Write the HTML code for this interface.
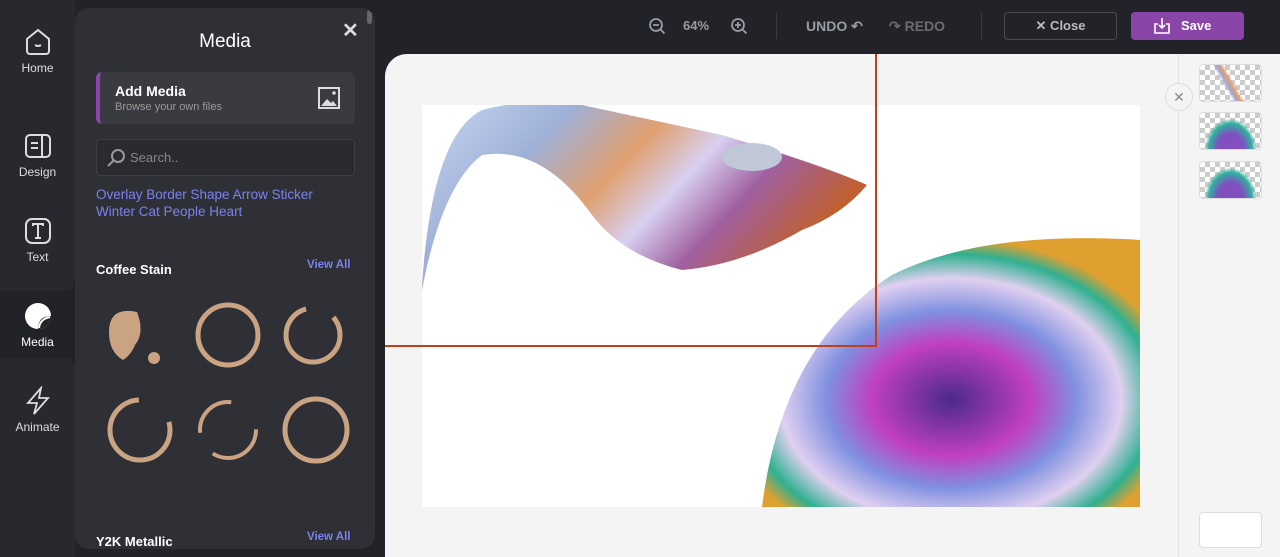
<!DOCTYPE html>
<html><head><meta charset="utf-8"><style>
*{box-sizing:border-box;margin:0;padding:0}
body{width:1280px;height:557px;overflow:hidden;background:#212328;font-family:"Liberation Sans",sans-serif;position:relative}
.abs{position:absolute}
.blk{background:#27292e}
.item{position:absolute;left:0;width:75px;text-align:center;font-size:12px;color:#ddd}
.item svg{display:block;margin:0 auto 4px}
.panel{left:75px;top:8px;width:300px;height:541px;background:#2f3035;border-radius:14px;overflow:hidden}
.tb{color:#9a9ca3;font-weight:bold;font-size:14px}
</style></head><body>
<div class="abs blk" style="left:0;top:0;width:75px;height:291px;border-radius:0 0 10px 0"></div>
<div class="abs blk" style="left:0;top:358px;width:75px;height:199px;border-radius:0 10px 0 0"></div>
<div class="item" style="top:27px"><svg width="30" height="30" viewBox="0 0 30 30" fill="none" stroke="#ddd" stroke-width="2"><path d="M4 12L15 3l11 9v12a3 3 0 0 1-3 3H7a3 3 0 0 1-3-3z"/><path d="M12 18q3 2 6 0"/></svg>Home</div>
<div class="item" style="top:131px"><svg width="30" height="30" viewBox="0 0 30 30" fill="none" stroke="#ddd" stroke-width="2"><rect x="3" y="4" width="24" height="22" rx="4"/><path d="M19 4v22M8 12h7M8 17h7"/></svg>Design</div>
<div class="item" style="top:216px"><svg width="30" height="30" viewBox="0 0 30 30" fill="none" stroke="#ddd" stroke-width="2"><rect x="3" y="3" width="24" height="24" rx="6"/><path d="M10 10V8h10v2M15 8v14M12 22h6"/></svg>Text</div>
<div class="item" style="top:301px;color:#fff"><svg width="30" height="30" viewBox="0 0 30 30"><circle cx="15" cy="15" r="13" fill="#fff"/><path d="M28 15a13 13 0 0 1-13 13q0-13 13-13z" fill="#212328"/><path d="M16 27q1-9 11-11" stroke="#fff" stroke-width="2" fill="none"/></svg>Media</div>
<div class="item" style="top:386px"><svg width="30" height="30" viewBox="0 0 30 30" fill="none" stroke="#ddd" stroke-width="1.8"><path d="M18 2L5 17h9l-3 11 14-16h-9z"/></svg>Animate</div>
<div class="abs panel">
<div class="abs" style="right:3px;top:2px;width:5px;height:14px;background:#666;border-radius:3px"></div>
<div class="abs" style="left:0;width:300px;top:23px;text-align:center;color:#fff;font-size:19px">Media</div>
<div class="abs" style="left:267px;top:10px;color:#ddd;font-size:20px;font-weight:bold">✕</div>
<div class="abs" style="left:21px;top:64px;width:259px;height:52px;background:#3a3b40;border-radius:6px;border-left:4px solid #8e44ad">
 <div class="abs" style="left:15px;top:11px;color:#fff;font-size:14px;font-weight:bold">Add Media</div>
 <div class="abs" style="left:15px;top:29px;color:#999;font-size:11px">Browse your own files</div>
 <svg class="abs" style="left:218px;top:15px" width="22" height="22" viewBox="0 0 22 22"><rect x="1" y="1" width="20" height="20" fill="none" stroke="#ddd" stroke-width="2"/><path d="M3 19l6-7 4 4 2-2 4 5z" fill="#ddd"/><circle cx="16" cy="6" r="1.8" fill="#ddd"/></svg>
</div>
<div class="abs" style="left:21px;top:131px;width:259px;height:37px;background:#2a2b2f;border:1px solid #3d3e43;border-radius:4px">
 <svg class="abs" style="left:9px;top:8px" width="20" height="20" viewBox="0 0 20 20" fill="none" stroke="#999" stroke-width="2"><circle cx="12" cy="8" r="6"/><path d="M8 12l-6 6"/></svg>
 <div class="abs" style="left:33px;top:10px;color:#888;font-size:13px">Search..</div>
</div>
<div class="abs" style="left:21px;top:178px;color:#7b82f0;font-size:13.5px;line-height:17px">Overlay Border Shape Arrow Sticker<br>Winter Cat People Heart</div>
<div class="abs" style="left:21px;top:254px;color:#fff;font-size:13px;font-weight:bold">Coffee Stain</div>
<div class="abs" style="left:232px;top:251px;color:#7b82f0;font-size:11.5px;font-weight:bold">View All</div>
<svg class="abs" style="left:0;top:290px" width="300" height="180" viewBox="0 0 300 180" fill="none" stroke="#c9a382">
<path d="M62 14q-28-6-28 20q0 20 14 28q8-5 12-15q10-12 2-33z" fill="#c9a382" stroke="none"/><circle cx="79" cy="60" r="6" fill="#c9a382" stroke="none"/>
<circle cx="153" cy="37" r="30" stroke-width="5"/>
<circle cx="238" cy="37" r="27" stroke-width="5" stroke-dasharray="120 30"/>
<circle cx="65" cy="132" r="30" stroke-width="5" stroke-dasharray="140 40"/>
<circle cx="153" cy="132" r="28" stroke-width="4" stroke-dasharray="60 25 50 40"/>
<circle cx="241" cy="132" r="31" stroke-width="5"/>
</svg>
<div class="abs" style="left:21px;top:526px;color:#fff;font-size:13px;font-weight:bold">Y2K Metallic</div>
<div class="abs" style="left:232px;top:523px;color:#7b82f0;font-size:11.5px;font-weight:bold">View All</div>
</div>
<svg class="abs" style="left:648px;top:17px" width="18" height="18" viewBox="0 0 18 18" fill="none" stroke="#9a9ca3" stroke-width="1.8"><circle cx="8" cy="8" r="6"/><path d="M5 8h6M12.5 12.5l4 4"/></svg>
<div class="abs tb" style="left:683px;top:18px;font-size:13px">64%</div>
<svg class="abs" style="left:730px;top:17px" width="18" height="18" viewBox="0 0 18 18" fill="none" stroke="#9a9ca3" stroke-width="1.8"><circle cx="8" cy="8" r="6"/><path d="M5 8h6M8 5v6M12.5 12.5l4 4"/></svg>
<div class="abs" style="left:776px;top:13px;width:1px;height:26px;background:#3a3c42"></div>
<div class="abs tb" style="left:806px;top:18px">UNDO ↶</div>
<div class="abs tb" style="left:889px;top:18px;color:#6a6c72">↷ REDO</div>
<div class="abs" style="left:981px;top:13px;width:1px;height:26px;background:#3a3c42"></div>
<div class="abs" style="left:1004px;top:12px;width:113px;height:28px;border:1px solid #4a4c52;border-radius:4px;color:#bbb;font-size:13px;font-weight:bold;text-align:center;line-height:26px">✕ Close</div>
<div class="abs" style="left:1131px;top:12px;width:113px;height:28px;background:#8a45a8;border-radius:4px;color:#fff;font-size:13px;font-weight:bold;line-height:28px">
<svg class="abs" style="left:22px;top:5px" width="18" height="18" viewBox="0 0 18 18" fill="none" stroke="#fff" stroke-width="1.6"><path d="M5 7H2v9h14V7h-3M9 1v10M6 8l3 3 3-3"/></svg><span class="abs" style="left:50px">Save</span></div>
<div class="abs" style="left:385px;top:54px;width:793px;height:503px;background:#f4f4f4;border-radius:22px 0 0 0"></div>
<div class="abs" style="left:1178px;top:54px;width:102px;height:503px;background:#f4f4f4;border-left:1px solid #e2e2e2"></div>
<svg class="abs" style="left:422px;top:105px" width="718" height="402" viewBox="0 0 718 402">
<defs>
<linearGradient id="g1" x1="0" y1="0" x2="1" y2="0.4"><stop offset="0" stop-color="#c8d8f0"/><stop offset=".3" stop-color="#9fb0d8"/><stop offset=".5" stop-color="#e0a070"/><stop offset=".65" stop-color="#d8d0f0"/><stop offset=".8" stop-color="#a060a0"/><stop offset="1" stop-color="#c06030"/></linearGradient>
<radialGradient id="g2" cx=".5" cy=".6" r=".6"><stop offset="0" stop-color="#4a2a8a"/><stop offset=".35" stop-color="#c040c0"/><stop offset=".55" stop-color="#8090e0"/><stop offset=".75" stop-color="#e0d0f0"/><stop offset=".9" stop-color="#30b090"/><stop offset="1" stop-color="#e0a030"/></radialGradient>
</defs>
<rect width="718" height="402" fill="#fff"/>
<path d="M0 180Q10 30 60 5Q120 -10 160 0L300 30Q400 60 445 80Q420 110 380 125Q320 160 260 165Q200 150 170 110Q120 40 60 50Q20 80 0 185z" fill="url(#g1)"/>
<ellipse cx="330" cy="52" rx="30" ry="14" fill="#c0c8d8"/>
<path d="M340 402Q360 240 470 170Q560 125 718 135V402z" fill="url(#g2)"/>
</svg>
<div class="abs" style="left:875px;top:54px;width:2px;height:293px;background:#c0401a"></div>
<div class="abs" style="left:385px;top:345px;width:491px;height:2px;background:#c0401a"></div>
<div class="abs" style="left:1165px;top:83px;width:28px;height:28px;border-radius:50%;background:#f4f4f4;border:1px solid #ddd;color:#888;text-align:center;line-height:26px;font-size:14px">✕</div>
<div class="abs" style="left:1199px;top:64px;width:63px;height:38px;border:1px solid #ddd;border-radius:4px;background:linear-gradient(60deg,transparent 40%,#a0a8d0 45%,#e0a070 50%,transparent 55%),repeating-conic-gradient(#ccc 0 25%,#fff 0 50%) 0 0/10px 10px"></div>
<div class="abs" style="left:1199px;top:112px;width:63px;height:38px;border:1px solid #ddd;border-radius:4px;background:radial-gradient(ellipse at 50% 100%,#8050c0 30%,#30b0a0 50%,transparent 60%),repeating-conic-gradient(#ccc 0 25%,#fff 0 50%) 0 0/10px 10px"></div>
<div class="abs" style="left:1199px;top:161px;width:63px;height:38px;border:1px solid #ddd;border-radius:4px;background:radial-gradient(ellipse at 50% 100%,#8050c0 30%,#30b0a0 50%,transparent 60%),repeating-conic-gradient(#ccc 0 25%,#fff 0 50%) 0 0/10px 10px"></div>
<div class="abs" style="left:1199px;top:512px;width:63px;height:36px;border:1px solid #ddd;border-radius:4px;background:#fff"></div>
</body></html>
